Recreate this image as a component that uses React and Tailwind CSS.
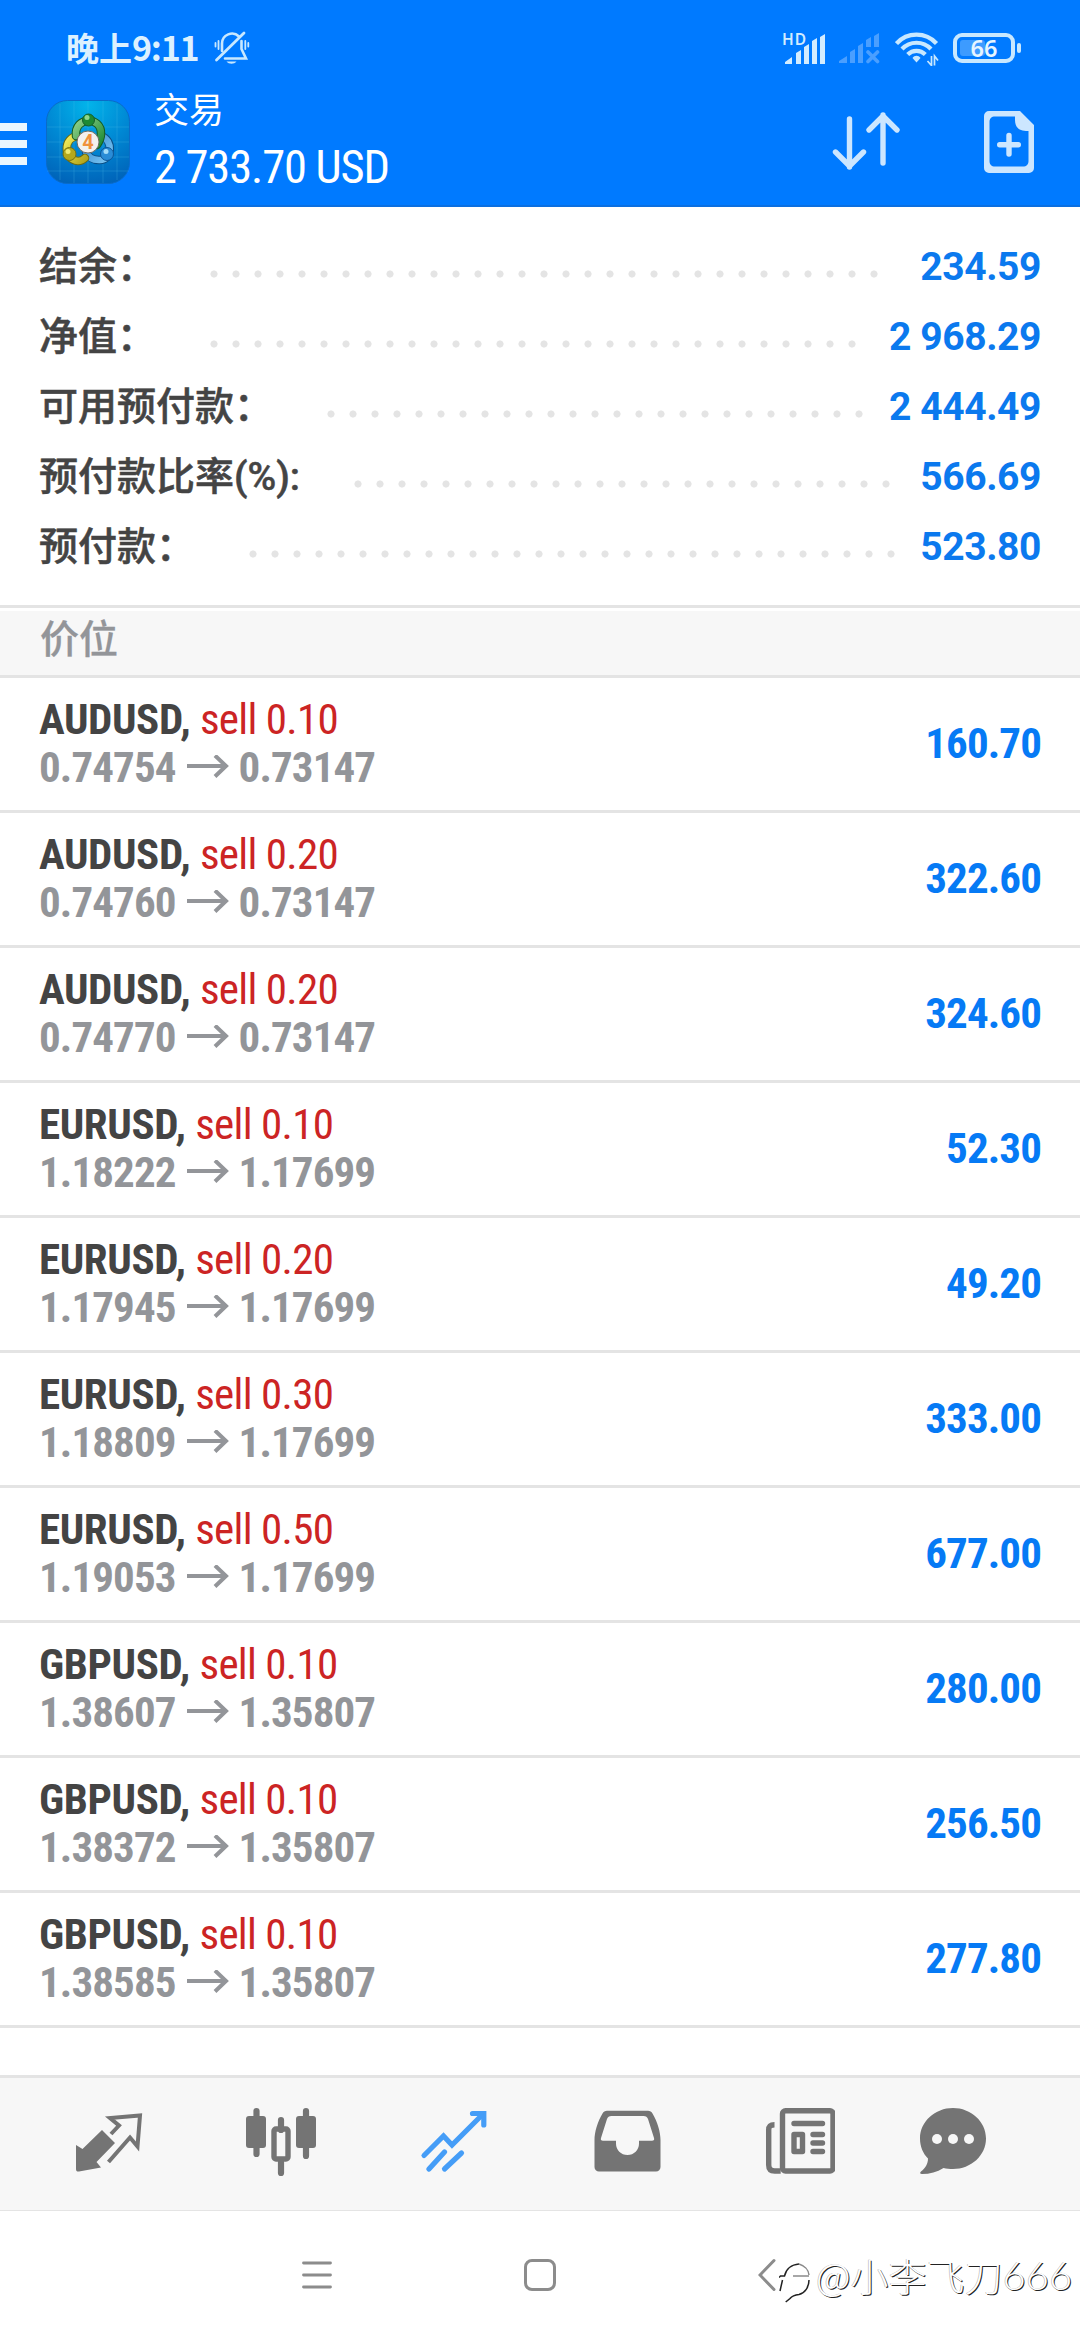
const DOT_STEP = 22;

const SUMMARY = [
  { label: "结余：", value: "234.59", dots: 31 },
  { label: "净值：", value: "2 968.29", dots: 30 },
  { label: "可用预付款：", value: "2 444.49", dots: 25 },
  { label: "预付款比率(%):", value: "566.69", dots: 25 },
  { label: "预付款：", value: "523.80", dots: 30 },
];

const POSITIONS = [
  { symbol: "AUDUSD", side: "sell 0.10", open: "0.74754", current: "0.73147", profit: "160.70" },
  { symbol: "AUDUSD", side: "sell 0.20", open: "0.74760", current: "0.73147", profit: "322.60" },
  { symbol: "AUDUSD", side: "sell 0.20", open: "0.74770", current: "0.73147", profit: "324.60" },
  { symbol: "EURUSD", side: "sell 0.10", open: "1.18222", current: "1.17699", profit: "52.30" },
  { symbol: "EURUSD", side: "sell 0.20", open: "1.17945", current: "1.17699", profit: "49.20" },
  { symbol: "EURUSD", side: "sell 0.30", open: "1.18809", current: "1.17699", profit: "333.00" },
  { symbol: "EURUSD", side: "sell 0.50", open: "1.19053", current: "1.17699", profit: "677.00" },
  { symbol: "GBPUSD", side: "sell 0.10", open: "1.38607", current: "1.35807", profit: "280.00" },
  { symbol: "GBPUSD", side: "sell 0.10", open: "1.38372", current: "1.35807", profit: "256.50" },
  { symbol: "GBPUSD", side: "sell 0.10", open: "1.38585", current: "1.35807", profit: "277.80" },
];

function MutedBellIcon() {
  return (
    <svg className="ml-[16px] h-[34px] w-[36px]" viewBox="0 0 36 34" fill="none" stroke="#c8e8ff" strokeWidth="2.6" strokeLinecap="round">
      <path d="M8 20V12.500a10 10 0 0 1 17-7" />
      <path d="M27.500 10V18l4.500 9.500H11" />
      <path d="M2.500 29 30 2" strokeWidth="2.800" />
      <path d="M1.500 12v3.500M4.500 10v8M34.300 12v3.500M31.300 10v8" strokeWidth="1.800" />
      <path d="M12.500 30.500h10c-2.500 3-7.500 3-10 0Z" fill="#c8e8ff" stroke="none" />
    </svg>
  );
}

function SignalIcon() {
  return (
    <svg className="h-[34px] w-[42px] overflow-visible" viewBox="0 -2 42 34" fill="#d2ecff">
      <text x="-1" y="11.500" fontSize="15.500" fontWeight="600" className="font-['Noto_Sans']" textLength="24">HD</text>
      <path d="M2 31V29l7-5v7zM13 31V20l5-3v14zM21 31V14l5-3v20zM29 31V8l5-3v26zM37 31V4l5-3v30z" />
    </svg>
  );
}

function NoSignalIcon() {
  return (
    <svg className="ml-[14px] h-[32px] w-[41px]" viewBox="0 0 41 32" fill="#4a9fff">
      <path d="M0 31V29l8-5v7zM11 31V20l5-3v14zM19 31V14l5-3v20zM27 15V8l5-3v10zM35 15V4l5-3v14z" />
      <path d="m29 20 9.500 9.500M38.500 20 29 29.500" stroke="#4a9fff" strokeWidth="3.600" strokeLinecap="round" />
    </svg>
  );
}

function WifiIcon() {
  return (
    <svg className="ml-[15px] h-[35px] w-[44px]" viewBox="0 0 44 35" fill="none" stroke="#c8e8ff" strokeWidth="4.200">
      <path d="M1.500 12.500a27 27 0 0 1 40 0" />
      <path d="M7 18a20 20 0 0 1 29 0" />
      <path d="M12.700 23.500a12.500 12.500 0 0 1 17.600 0" />
      <path d="M17.500 27c2-3 6-3 8 0l-4 4.500z" fill="#c8e8ff" stroke="none" />
      <path d="M36.500 25v9.500l-4-4.500M39.500 34.500V25l3.500 4.500" strokeWidth="1.700" />
    </svg>
  );
}

function BatteryIcon() {
  return (
    <svg className="ml-[14px] h-[32px] w-[70px]" viewBox="0 0 70 32">
      <rect x="7" y="8" width="25" height="16" rx="3" fill="#3d9bff" />
      <rect x="2" y="3" width="58" height="26" rx="7" fill="none" stroke="#c8e8ff" strokeWidth="4" />
      <rect x="64" y="11" width="4" height="10" rx="2" fill="#c8e8ff" />
      <text x="31" y="24.500" textAnchor="middle" fontSize="23.500" fontWeight="600" fill="#e6f5ff" className="font-['Noto_Sans']">66</text>
    </svg>
  );
}

function StatusBar() {
  return (
    <div className="flex h-[94px] items-center pt-[2px] pr-[57px] pl-[66px]">
      <div className="-mt-[2px] font-['Noto_Sans_CJK_SC',sans-serif] text-[33px] leading-[40px] font-bold text-[#dcf1ff]">
        晚上<span className="text-[34px] tracking-[-1.2px]">9:11</span>
      </div>
      <MutedBellIcon />
      <div className="ml-auto flex items-center">
        <SignalIcon />
        <NoSignalIcon />
        <WifiIcon />
        <BatteryIcon />
      </div>
    </div>
  );
}

function AppLogo() {
  return (
    <svg className="ml-[19px] h-[84px] w-[84px]" viewBox="0 0 84 84">
      <defs>
        <radialGradient id="tile" cx="0.5" cy="0.05" r="1">
          <stop offset="0" stopColor="#02b4ea" />
          <stop offset="0.5" stopColor="#0089d4" />
          <stop offset="1" stopColor="#0062b8" />
        </radialGradient>
        <linearGradient id="green" x1="0" y1="0" x2="1" y2="1">
          <stop offset="0" stopColor="#8fd08a" />
          <stop offset="1" stopColor="#1c8a34" />
        </linearGradient>
        <linearGradient id="yellow" x1="0" y1="0" x2="1" y2="1">
          <stop offset="0" stopColor="#f2ec5a" />
          <stop offset="1" stopColor="#b3a51c" />
        </linearGradient>
        <linearGradient id="blue" x1="0" y1="0" x2="1" y2="1">
          <stop offset="0" stopColor="#2f86cf" />
          <stop offset="1" stopColor="#7cc6f2" />
        </linearGradient>
      </defs>
      <rect x="0.500" y="0.500" width="83" height="83" rx="21" fill="url(#tile)" stroke="#0a6bc8" />
      <path d="M14 4v76M28 1v82M42 1v82M57 1v82M71 4v76M1 27h82M1 42h82M1 57h82M1 71h82" stroke="#5cc8f0" strokeOpacity="0.22" />
      <g fill="none" strokeLinecap="round">
        <path d="M55 36c13 4 11 25-2 24-6 0-11-3-13-8" stroke="#0b4f86" strokeWidth="8.500" />
        <path d="M55 36c13 4 11 25-2 24-6 0-11-3-13-8" stroke="url(#blue)" strokeWidth="6.500" />
        <path d="M32 36c-15 1-15 24 0 25 3 0 5-1 7-3" stroke="#6b6a12" strokeWidth="8.500" />
        <path d="M32 36c-15 1-15 24 0 25 3 0 5-1 7-3" stroke="url(#yellow)" strokeWidth="6.500" />
        <path d="M30 36c-2-20 26-20 25-2 0 5-2 8-4 11" stroke="#155c22" strokeWidth="8.500" />
        <path d="M30 36c-2-20 26-20 25-2 0 5-2 8-4 11" stroke="url(#green)" strokeWidth="6.500" />
      </g>
      <circle cx="42.500" cy="20" r="6" fill="#1d8a34" stroke="#15602a" />
      <circle cx="41" cy="17.500" r="2.500" fill="#8ed68c" />
      <circle cx="23.500" cy="54" r="6.500" fill="#b5a81c" stroke="#75700f" />
      <circle cx="22" cy="51.500" r="2.500" fill="#f0ea70" />
      <circle cx="61" cy="54" r="6.500" fill="#2a8cd6" stroke="#0d5596" />
      <circle cx="60" cy="51.500" r="2.500" fill="#a2dcf8" />
      <circle cx="42" cy="42" r="11" fill="#f3f1ee" stroke="#6e6a60" />
      <text x="42" y="49" textAnchor="middle" fontSize="20" fontWeight="700" fill="#f0923c" className="font-['Roboto']">4</text>
    </svg>
  );
}

function SortIcon() {
  return (
    <svg className="mb-[2px] ml-auto h-[62px] w-[70px]" viewBox="0 0 70 62" fill="none" stroke="#cce6ff" strokeWidth="5.400" strokeLinecap="round" strokeLinejoin="round">
      <path d="M17.500 9v48M3.500 42l14 14 14-14" />
      <path d="M51 53V5M37 20l14-14 14 14" />
    </svg>
  );
}

function NewOrderIcon() {
  return (
    <svg className="ml-[82px] h-[62px] w-[50px]" viewBox="0 0 50 62">
      <path d="M5 0h31l14 14v43a5 5 0 0 1-5 5H5a5 5 0 0 1-5-5V5a5 5 0 0 1 5-5Zm6 5.500c-3.500 0-5.500 2-5.500 5.500v39c0 3.500 2 5.500 5.500 5.500h28c3.500 0 5.500-2 5.500-5.500V20H42c-7 0-11-4-11-11V5.500Z" fill="#cce6ff" fillRule="evenodd" />
      <path d="M25 24.500v18.500M15.700 33.700h18.600" stroke="#cce6ff" strokeWidth="5.400" strokeLinecap="round" />
    </svg>
  );
}

function Header() {
  return (
    <header className="h-[207px] border-b-2 border-[#0b6fe0] bg-[#007aff]">
      <StatusBar />
      <div className="flex h-[96px] items-center pr-[46px]">
        <div className="mt-[3px] flex w-[27px] flex-col gap-[9px]">
          <span className="h-2 bg-[#eaf6ff]" />
          <span className="h-2 bg-[#eaf6ff]" />
          <span className="h-2 bg-[#eaf6ff]" />
        </div>
        <AppLogo />
        <div className="mb-[3px] ml-[24px] text-white">
          <div className="font-['Noto_Sans_CJK_SC',sans-serif] text-[35px] leading-[40px]">交易</div>
          <div className="mt-[13px] font-['Roboto_Condensed',sans-serif] text-[46.5px] leading-[52px] tracking-[-1.1px]">2 733.70 USD</div>
        </div>
        <SortIcon />
        <NewOrderIcon />
      </div>
    </header>
  );
}

function SummaryRow({ label, value, dots }) {
  return (
    <div className="flex h-[70px] items-center">
      <span className="font-['Roboto','Noto_Sans_CJK_SC',sans-serif] font-medium text-[#444444] [-webkit-text-stroke:0.5px_#444444]">{label}</span>
      <span
        className="mt-[14px] ml-[47px] h-[22px] shrink-0 bg-[radial-gradient(circle,#e4e4e4_3.2px,transparent_3.9px)] bg-[length:22px_22px]"
        style={{ width: dots * DOT_STEP }}
      />
      <span className="ml-auto font-['Roboto',sans-serif] font-bold tracking-[-0.4px] text-[#0b79ee]">{value}</span>
    </div>
  );
}

function ArrowRight() {
  return (
    <svg className="mr-[10px] ml-[11px] h-6 w-[42px]" viewBox="0 0 42 24" fill="none" stroke="#939599" strokeWidth="4">
      <path d="M0 11h39M28 0.500 39 11 28 21.500" />
    </svg>
  );
}

function PositionRow({ symbol, side, open, current, profit }) {
  return (
    <div className="flex h-[135px] items-center justify-between border-b-3 border-[#e4e4e4] px-[39px] pb-[2px] font-['Roboto_Condensed',sans-serif] text-[43px] leading-[48px]">
      <div>
        <div className="font-bold tracking-[-0.4px] text-[#444444]">
          {symbol}, <span className="font-normal tracking-[-0.7px] text-[#cc2424]">{side}</span>
        </div>
        <div className="flex items-center font-bold tracking-[-0.9px] text-[#939599]">
          {open}
          <ArrowRight />
          {current}
        </div>
      </div>
      <div className="font-bold tracking-[-0.9px] text-[#067af5]">{profit}</div>
    </div>
  );
}

function TabBar() {
  return (
    <nav className="flex h-[136px] items-center gap-[103px] border-t-3 border-b border-[#e4e4e4] bg-[#f7f7f7] pl-[73px] text-[#747474]">
      <svg className="h-20 w-[70px]" viewBox="0 0 70 80" fill="none">
        <path d="m3 41 6.500 4 19.500-19 13 13-18.500 19 4.500 5.500L6 67.500c-2 .2-3-.5-3-2.500Z" fill="currentColor" />
        <path d="m38 30 8-8.500-9-7.500 30-2.500-2.500 31-7.500-9-21.500 24.500" stroke="currentColor" strokeWidth="4" />
      </svg>
      <svg className="h-20 w-[70px]" viewBox="0 0 70 80" fill="none" stroke="currentColor" strokeLinecap="round">
        <path d="M10.500 7v43M60 7v45M35 16v10M35 58v11" strokeWidth="6.200" />
        <rect x="0" y="12" width="20" height="32" rx="3" fill="currentColor" stroke="none" />
        <rect x="50" y="12" width="20" height="32" rx="3" fill="currentColor" stroke="none" />
        <rect x="28" y="25" width="14" height="30" rx="2" strokeWidth="5.400" />
      </svg>
      <svg className="h-20 w-[70px]" viewBox="0 0 70 80" fill="none" stroke="#459df7" strokeWidth="5.200" strokeLinecap="round">
        <path d="m5 51.500 19.500-19.500 8.500 9L64 10" />
        <path d="M53.500 9.500h11.300v11.500" />
        <path d="m10 65 15.500-17M25.500 65l17-16" />
      </svg>
      <svg className="h-20 w-[70px]" viewBox="0 0 70 80" fill="currentColor">
        <path d="M15 6.700h41c2 0 3.500 1 4.500 2.800C65.500 18 68.500 28 68.500 36v27a4.500 4.500 0 0 1-4.500 4.500H7A4.500 4.500 0 0 1 2.500 63V36c0-8 3-18 8-26.500 1-1.800 2.500-2.800 4.500-2.800ZM19.500 12c-2.500 0-3.700 1-4.500 3L9 34c-.6 1.700.2 2.700 2 2.700h13v3c0 6 5 11.300 11.500 11.300S47 45.700 47 39.700v-3h13c1.800 0 2.600-1 2-2.700l-6-19c-.8-2-2-3-4.500-3Z" fillRule="evenodd" />
      </svg>
      <svg className="h-20 w-[70px]" viewBox="0 0 70 80" fill="none" stroke="currentColor" strokeWidth="5.400" strokeLinecap="round">
        <rect x="17.500" y="6.700" width="50.500" height="60.300" rx="3" />
        <path d="M9.500 20.700C5.500 20.700 3.700 22 3.700 26v35c0 4 1.800 6 6 6h6" strokeLinecap="butt" />
        <path d="M29 19.500h28.500M48 30.500h9.500M48 39h9.500M48 47.500h9.500" />
        <rect x="29" y="30.500" width="8.500" height="17" strokeLinejoin="round" />
      </svg>
      <svg className="-ml-[20px] h-20 w-[70px]" viewBox="0 0 70 80">
        <path d="M35 4C53 4 68 17.500 68 34.500S53 65 35 65c-3.500 0-6.500-.3-9.500-1C19 68 12 70 4 70c-2 0-2.500-1-1-2.500C7.500 64 10 60 10 54.500 5 49.500 2 42.500 2 34.500 2 17.500 17 4 35 4Z" fill="currentColor" />
        <circle cx="19" cy="35" r="5" fill="#f7f7f7" />
        <circle cx="35" cy="35" r="5" fill="#f7f7f7" />
        <circle cx="51" cy="35" r="5" fill="#f7f7f7" />
      </svg>
    </nav>
  );
}

function SystemNav() {
  return (
    <div className="flex h-[128px] items-center pl-[302px]">
      <svg className="h-9 w-[30px]" viewBox="0 0 30 36" stroke="#8c8c8c" strokeWidth="2.800" strokeLinecap="round">
        <path d="M1.500 6h27M1.500 18h27M1.500 30h27" />
      </svg>
      <div className="ml-[192px] h-8 w-8 rounded-[8px] border-3 border-[#8c8c8c]" />
      <svg className="ml-[202px] h-9 w-[18px]" viewBox="0 0 18 36" fill="none" stroke="#8c8c8c" strokeWidth="3" strokeLinecap="round">
        <path d="M16 3.500 2 18l14 14.500" />
      </svg>
      <div className="ml-[3px] flex items-center font-['Noto_Sans_CJK_SC',sans-serif] text-[38px] leading-[48px] font-light text-white [text-shadow:1px_1px_0_#222,-0.5px_-0.5px_0_#aaa]">
        <svg className="mt-[8px] mr-[4px] h-12 w-[33px]" viewBox="0 0 33 48" fill="none" strokeWidth="1.500">
          <path d="M0 22.500 1.500 21h4C7 14 12.500 9.500 20 9M3.500 25 1 36M30 25c0 7-4 13-10 14.500-5 .5-7 1.500-9 4L6.700 47" stroke="#222222" />
          <path d="M20 9c5 1.500 9.500 5.500 10 11M14 21h16" stroke="#8a8a8a" />
        </svg>
        @小李飞刀<span className="font-['Lato',sans-serif] text-[40px]">666</span>
      </div>
    </div>
  );
}

export default function App() {
  return (
    <div className="flex h-[2340px] w-[1080px] flex-col overflow-hidden bg-white">
      <Header />
      <section className="h-[398px] px-[39px] pt-[25px] text-[39px] leading-[70px]">
        {SUMMARY.map((row) => (
          <SummaryRow key={row.label} {...row} />
        ))}
      </section>
      <div className="border-y-3 border-[#e4e4e4] pt-[3px]">
        <h2 className="h-[64px] bg-[#f7f7f7] pl-[40px] font-['Noto_Sans_CJK_SC',sans-serif] text-[39px] leading-[50px] font-medium text-[#939599] [-webkit-text-stroke:0.3px_#939599]">
          价位
        </h2>
      </div>
      <main className="h-[1397px]">
        {POSITIONS.map((position) => (
          <PositionRow key={position.open} {...position} />
        ))}
      </main>
      <TabBar />
      <SystemNav />
    </div>
  );
}
